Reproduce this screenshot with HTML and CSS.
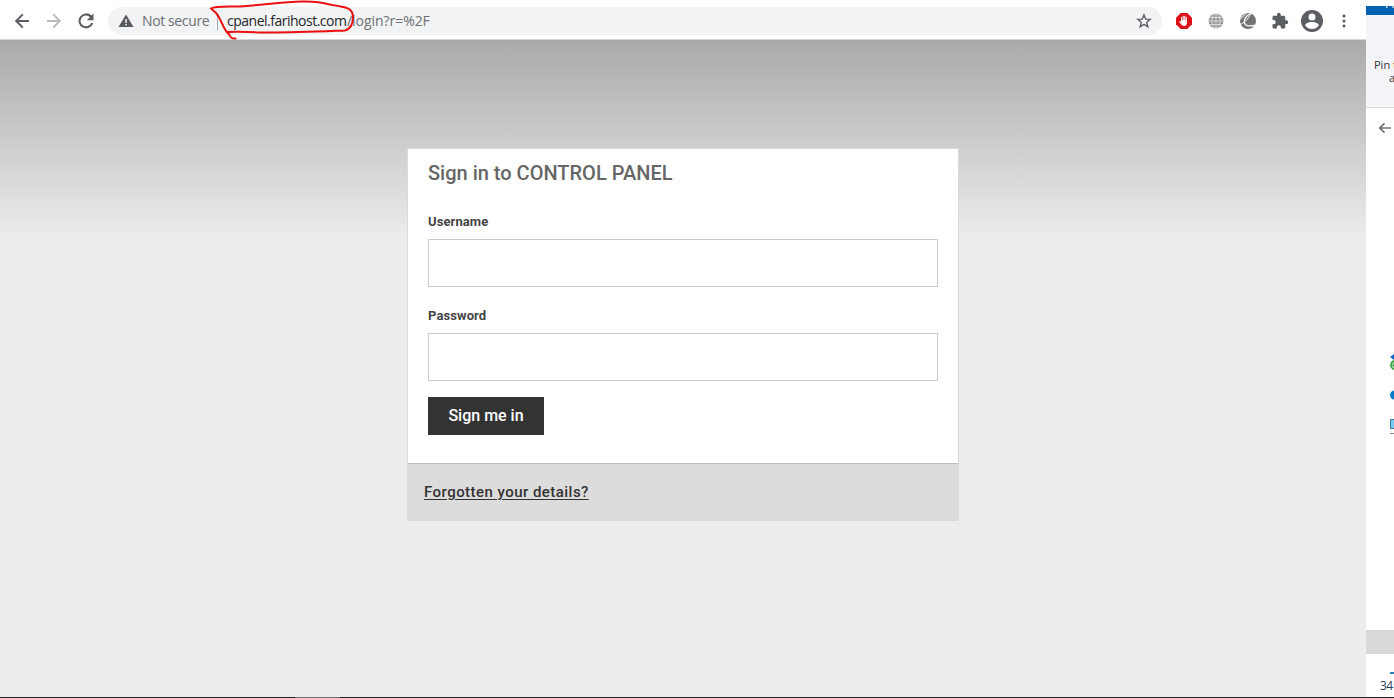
FILE: index.html
```html
<!DOCTYPE html>
<html lang="en">
<head>
<meta charset="utf-8">
<title>Sign in to CONTROL PANEL</title>
<link rel="stylesheet" href="styles.css">
</head>
<body>
<div class="screen">
  <div class="windows">
    <div class="browser">
      <header class="toolbar">
        <div class="nav">
          <svg width="24" height="24" viewBox="0 0 24 24" fill="#5b5e62"><path d="M19 11H8.600l4.900-4.900L12.100 4.700 4.800 12l7.300 7.300 1.400-1.400L8.600 13H19z"/></svg>
          <svg width="24" height="24" viewBox="0 0 24 24" fill="#b8babc"><path d="M5 11h10.400l-4.900-4.900 1.400-1.400 7.300 7.300-7.300 7.300-1.400-1.400 4.900-4.900H5z"/></svg>
          <svg width="20" height="20" viewBox="0 0 24 24" fill="#5b5e62"><path d="M18.500 5.500A9 9 0 1 0 20.700 14.500H18A6.500 6.500 0 1 1 16.700 7.400L13 11H21V3z"/></svg>
        </div>
        <div class="address">
          <svg class="warning" width="16" height="14" viewBox="0 0 16 14"><path fill="#56595d" d="M8 .5 15.500 13H.5z"/><path fill="#f1f3f4" d="M7.300 5h1.500v4H7.300zM7.300 10h1.500v1.500H7.300z"/></svg>
          <span class="insecure">Not secure</span>
          <span class="separator"></span>
          <span class="host">cpanel.farihost.com</span><span class="path">/login?r=%2F</span>
          <svg class="star" width="16" height="16" viewBox="0 0 16 16" fill="none" stroke="#5b5e62" stroke-width="1.400"><path d="m8 1.900 1.700 4.200 4.500.3-3.450 2.900 1.100 4.400L8 11.350 4.150 13.700l1.100-4.400L1.800 6.400l4.500-.3z"/></svg>
        </div>
        <div class="actions">
          <svg width="16" height="16" viewBox="0 0 16 16"><path fill="#db1016" d="M4.700 0h6.600L16 4.700v6.600L11.300 16H4.700L0 11.300V4.700z"/><path fill="#fff" d="M5 4.200q.6-.6 1.100 0v3h.5V3.100q.6-.7 1.100 0v4h.5v-4q.6-.7 1.100 0v4.200h.5V4.200q.6-.6 1.100 0v6.200Q10.500 13 8 13q-1.900 0-2.900-1.800L3.200 8.700q.3-1 1.300-.4L5 8.800z"/></svg>
          <svg width="16" height="16" viewBox="0 0 16 16"><circle cx="8" cy="8" r="7.500" fill="#999"/><g fill="none" stroke="#eee" stroke-width=".7"><path d="M8 .5v15M1 4.500h14M.5 8h15M1 11.500h14"/><ellipse cx="8" cy="8" rx="4" ry="7.500"/></g></svg>
          <svg width="18" height="18" viewBox="0 0 18 18"><circle cx="9" cy="9" r="8" fill="#747474"/><g fill="none" stroke="#fff" stroke-linecap="round"><path stroke-width="1.300" d="M11.500 1.500C7 3.500 4.500 8 5.500 11c1 3 5 3.500 10.500 2.500"/><path stroke-width="1" d="M1 12.500C5 11 9 7.500 11.500 2M1 7.500 7 1.500"/></g></svg>
          <svg width="18" height="18" viewBox="0 0 24 24" fill="#5b5e62"><path d="M20.500 11H19V7c0-1.100-.9-2-2-2h-4V3.500a2.500 2.500 0 0 0-5 0V5H4c-1.100 0-2 .9-2 2v3.800h1.500a2.700 2.700 0 0 1 0 5.400H2V20c0 1.100.9 2 2 2h3.800v-1.500a2.700 2.700 0 0 1 5.400 0V22H17c1.100 0 2-.9 2-2v-4h1.500a2.500 2.500 0 0 0 0-5z"/></svg>
          <svg class="avatar" width="22" height="22" viewBox="0 0 22 22"><circle cx="11" cy="11" r="11" fill="#5a5d61"/><circle cx="11" cy="7" r="3.500" fill="#fff"/><path fill="#fff" d="M4.200 15.500c0-4.700 13.600-4.700 13.600 0-3.400 4.800-10.200 4.800-13.600 0z"/></svg>
          <svg class="more" width="4" height="16" viewBox="0 0 4 16" fill="#56595d"><circle cx="2" cy="3" r="1.500"/><circle cx="2" cy="8" r="1.500"/><circle cx="2" cy="13" r="1.500"/></svg>
        </div>
      </header>
      <main class="page">
        <form class="login">
          <div class="fields">
            <h1>Sign in to CONTROL PANEL</h1>
            <label for="username">Username</label>
            <input id="username" type="text">
            <label for="password">Password</label>
            <input id="password" type="password">
            <button type="button"><span>Sign me in</span></button>
          </div>
          <div class="help"><a href="#">Forgotten your details?</a></div>
        </form>
      </main>
    </div>
    <aside class="explorer">
      <div class="titlebar"><span>Fi</span></div>
      <div class="ribbon"><span>Pin t</span><span class="second">a</span></div>
      <svg class="back" width="14" height="12" viewBox="0 0 14 12" fill="none" stroke="#727272" stroke-width="1.700"><path d="M13 6H2M6.500 1.300 1.700 6l4.800 4.700"/></svg>
      <svg class="shortcuts" width="5" height="86" viewBox="0 0 5 86"><path fill="#1765cf" d="m1 7 4-3v6z"/><circle cx="6" cy="15" r="5" fill="#3fab4c"/><path d="M3 15q1-3 3-2M3 17h3" fill="none" stroke="#e4f4e4"/><circle cx="5.500" cy="45" r="4.500" fill="#087bc8"/><path d="M1.500 69.500H7v9H1.500z" fill="#7cc9f3" stroke="#39779a"/><path d="M1 83.500h4" stroke="#888"/></svg>
      <div class="selected"></div>
      <div class="status"><span>34</span><i></i></div>
    </aside>
  </div>
  <div class="taskbar"><span></span></div>
  <svg class="annotation" width="150" height="42" viewBox="0 0 150 42" fill="none" stroke="#ed1010" stroke-width="2" stroke-linecap="round" stroke-linejoin="round"><path d="M25.500 38.500Q21 39 19.500 35L16 31C12 25 10 17 6 13L1 8.500C5 6 15 6.500 25 6.500 46 6 70 2 92 1.500c17-.5 24 2 30 3.500 14 2 21 3 21 12 0 7-3 12-8 13.500-25 1-56 2.500-86 2q-17-1-31-.5"/></svg>
</div>
</body>
</html>
```
FILE: styles.css
```css
* { box-sizing: border-box; }
body { margin: 0; overflow: hidden; font-family: Roboto, sans-serif; }
svg { display: block; flex: none; }
.screen { position: relative; width: 1394px; height: 698px; display: flex; flex-direction: column; background: #fff; }
.windows { display: flex; flex: 1; min-height: 0; }
.browser { width: 1366px; display: flex; flex-direction: column; }
.toolbar { height: 40px; display: flex; align-items: flex-start; padding-top: 7px; border-bottom: 1px solid #d5d5d5; background: #fff; }
.nav { width: 108px; height: 28px; padding-left: 10px; display: flex; align-items: center; gap: 8px; }
.nav svg:last-child { margin-left: 2px; }
.address { width: 1054px; height: 28px; display: flex; align-items: center; padding: 0 10px; border-radius: 14px; background: #f1f3f4; color: #6d7073; font: 14px/28px "Open Sans", sans-serif; white-space: nowrap; }
.insecure { width: 75px; margin-left: 8px; letter-spacing: -.38px; }
.separator { width: 1px; height: 17px; margin-right: 9px; background: #a9abad; }
.host { width: 120px; color: #25272a; letter-spacing: -.5px; }
.path { letter-spacing: -.05px; }
.star { margin-left: auto; }
.actions { height: 28px; display: flex; align-items: center; padding-left: 14px; gap: 16px; }
.actions svg:nth-child(3) { margin: 0 -1px; }
.actions svg:nth-child(4) { margin: 0 -1px; }
.avatar { margin-left: -3px; }
.more { margin-left: 3px; }
.page { flex: 1; padding: 108px 0 0 407px; background: linear-gradient(#aaa 0, #ededed 200px); background-color: #ededed; }
.login { width: 552px; border: 1px solid #dadada; background: #fff; border-radius: 1px; }
.fields { height: 314px; padding: 10px 20px 0; display: flex; flex-direction: column; }
h1 { margin: 0 0 27px; color: #666; font-size: 20px; font-weight: 500; line-height: 29px; }
label { height: 14px; color: #444; font-size: 13px; font-weight: 700; line-height: 14px; letter-spacing: .1px; }
input { width: 510px; height: 48px; margin: 10px 0 22px; border: 1px solid #ccc; background: #fff; }
input:last-of-type { margin-bottom: 16px; }
button { width: 116px; height: 38px; padding: 0; border: 0; background: #333; color: #fff; font: 500 16px/38px Roboto, sans-serif; }
.help { height: 57px; padding-left: 16px; border-top: 1px solid #bbb; background: #dcdcdc; line-height: 56px; }
.help a { color: #333; font-size: 15px; font-weight: 500; letter-spacing: .46px; text-underline-offset: 2px; }
.explorer { width: 28px; padding-top: 6px; display: flex; flex-direction: column; overflow: hidden; background: #fff; }
.titlebar { height: 9px; padding-left: 19px; overflow: hidden; background: #0063b1; color: #fff; font: 12px/1 "Open Sans", sans-serif; }
.titlebar span { display: block; margin-top: -8px; }
.ribbon { height: 93px; padding: 43px 0 0 8px; display: flex; flex-direction: column; border-bottom: 1px solid #d9dade; background: #f4f5f8; color: #333; font: 11px/13px "Open Sans", sans-serif; white-space: nowrap; }
.second { margin-left: 15px; }
.back { margin: 14px 0 0 12px; }
.shortcuts { margin: 216px 0 0 23px; }
.selected { height: 24px; margin-top: 194px; background: #d9d9d9; }
.status { position: relative; flex: 1; padding: 23px 0 0 14px; color: #253b59; font: 12px/17px "Open Sans", sans-serif; letter-spacing: -.5px; }
.status i { position: absolute; left: 24px; top: 18px; width: 4px; height: 2px; background: #2e81b6; }
.taskbar { height: 1px; background: #252324; }
.taskbar span { display: block; width: 45px; height: 1px; margin-left: 295px; background: #6b6969; }
.annotation { position: absolute; left: 210px; top: 0; }
```
